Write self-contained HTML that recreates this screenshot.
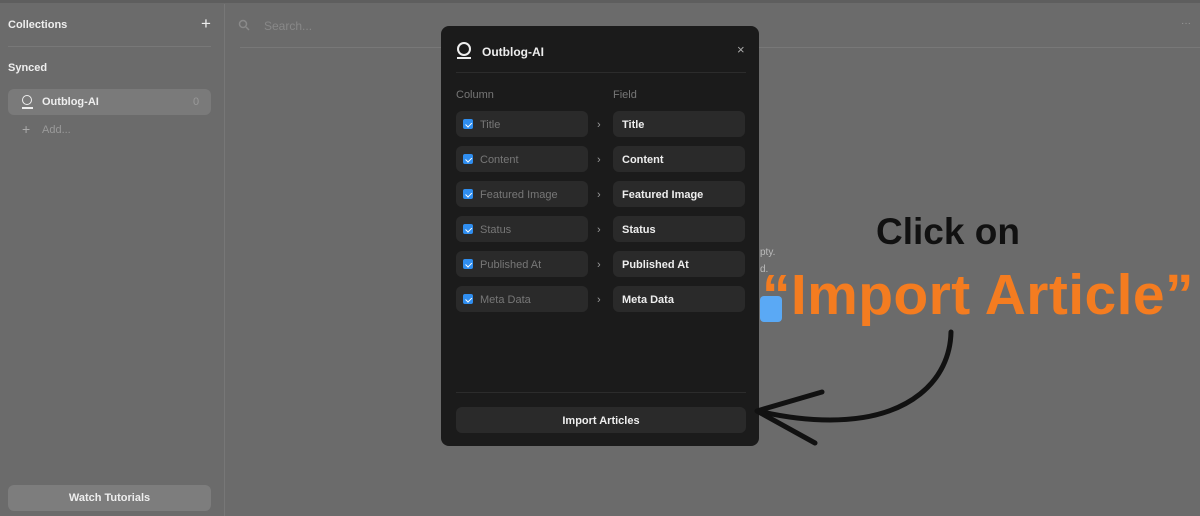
<!DOCTYPE html>
<html><head><style>
body{margin:0;width:1200px;height:516px;background:#6b6b6b;font-family:"Liberation Sans",sans-serif;position:relative;overflow:hidden}
.abs{position:absolute}
.side{left:0;top:4px;width:224px;height:512px;border-right:1px solid #777}
.t{color:#eee;font-weight:bold;font-size:11px}
.modal{left:441px;top:26px;width:318px;height:420px;background:#1b1b1b;border-radius:8px}
.row{position:absolute;height:26px;border-radius:6px;background:#2a2a2a;font-size:11px}
.l{left:15px;width:132px;color:#777}
.r{left:172px;width:132px;color:#eee;font-weight:bold}
.cb{position:absolute;left:7px;top:8px;width:10px;height:10px;background:#2f8ef0;border-radius:2px}
.cb:after{content:"";position:absolute;left:2px;top:1px;width:5px;height:3px;border-left:1.5px solid #fff;border-bottom:1.5px solid #fff;transform:rotate(-45deg) translate(-1px,2px)}
.row span{position:absolute;top:8px}
.l span{left:24px}.r span{left:9px}
.chev{position:absolute;left:156px;color:#999;font-size:11px}
</style></head><body>
<div class="abs" style="left:0;top:0;width:1200px;height:3px;background:#5e5e5e"></div>
<div class="abs side">
 <div class="abs t" style="left:8px;top:15px">Collections</div>
 <div class="abs" style="left:201px;top:10px;color:#eee;font-size:17px">+</div>
 <div class="abs" style="left:8px;top:42px;width:203px;height:1px;background:#787878"></div>
 <div class="abs t" style="left:8px;top:58px">Synced</div>
 <div class="abs" style="left:8px;top:85px;width:203px;height:26px;background:#7a7a7a;border-radius:6px"></div>
 <div class="abs" style="left:22px;top:91px;width:8px;height:8px;border:1.5px solid #eee;border-radius:50%"></div>
 <div class="abs" style="left:22px;top:103px;width:11px;height:1.5px;background:#eee"></div>
 <div class="abs t" style="left:42px;top:92px">Outblog-AI</div>
 <div class="abs" style="left:193px;top:92px;color:#999;font-size:11px">0</div>
 <div class="abs" style="left:22px;top:117px;color:#aaa;font-size:14px">+</div>
 <div class="abs" style="left:42px;top:120px;color:#9a9a9a;font-size:11px">Add...</div>
 <div class="abs" style="left:8px;top:481px;width:203px;height:26px;background:#7d7d7d;border-radius:6px;color:#eee;font-weight:bold;font-size:11px;text-align:center;line-height:26px">Watch Tutorials</div>
</div>
<svg class="abs" style="left:238px;top:19px" width="12" height="12"><circle cx="5" cy="5" r="3.5" stroke="#8a8a8a" stroke-width="1.5" fill="none"/><line x1="8" y1="8" x2="11" y2="11" stroke="#8a8a8a" stroke-width="1.5"/></svg>
<div class="abs" style="left:264px;top:19px;color:#888;font-size:12px">Search...</div>
<div class="abs" style="left:240px;top:47px;width:960px;height:1px;background:#787878"></div>
<div class="abs" style="left:1181px;top:18px;color:#999;font-size:10px">···</div>
<div class="abs" style="left:760px;top:247px;color:#bbb;font-size:10px">pty.</div>
<div class="abs" style="left:760px;top:264px;color:#bbb;font-size:10px">d.</div>
<div class="abs" style="left:760px;top:296px;width:22px;height:26px;background:#5aa9f5;border-radius:4px"></div>
<div class="abs modal">
 <div class="abs" style="left:16px;top:16px;width:10px;height:10px;border:2px solid #eee;border-radius:50%"></div>
 <div class="abs" style="left:16px;top:31px;width:14px;height:2px;background:#eee"></div>
 <div class="abs t" style="left:41px;top:19px;font-size:12px">Outblog-AI</div>
 <div class="abs" style="left:296px;top:16px;color:#aaa;font-size:13px">×</div>
 <div class="abs" style="left:15px;top:46px;width:290px;height:1px;background:#2c2c2c"></div>
 <div class="abs" style="left:15px;top:63px;color:#777;font-size:11px">Column</div>
 <div class="abs" style="left:172px;top:63px;color:#777;font-size:11px">Field</div>
 <div style="position:absolute;left:0;top:85px;width:318px">
  <div class="row l" style="top:0"><div class="cb"></div><span>Title</span></div><div class="chev" style="top:8px">›</div><div class="row r" style="top:0"><span>Title</span></div>
  <div class="row l" style="top:35px"><div class="cb"></div><span>Content</span></div><div class="chev" style="top:43px">›</div><div class="row r" style="top:35px"><span>Content</span></div>
  <div class="row l" style="top:70px"><div class="cb"></div><span>Featured Image</span></div><div class="chev" style="top:78px">›</div><div class="row r" style="top:70px"><span>Featured Image</span></div>
  <div class="row l" style="top:105px"><div class="cb"></div><span>Status</span></div><div class="chev" style="top:113px">›</div><div class="row r" style="top:105px"><span>Status</span></div>
  <div class="row l" style="top:140px"><div class="cb"></div><span>Published At</span></div><div class="chev" style="top:148px">›</div><div class="row r" style="top:140px"><span>Published At</span></div>
  <div class="row l" style="top:175px"><div class="cb"></div><span>Meta Data</span></div><div class="chev" style="top:183px">›</div><div class="row r" style="top:175px"><span>Meta Data</span></div>
 </div>
 <div class="abs" style="left:15px;top:366px;width:290px;height:1px;background:#2c2c2c"></div>
 <div class="abs" style="left:15px;top:381px;width:290px;height:26px;background:#2a2a2a;border-radius:6px;color:#eee;font-weight:bold;font-size:11px;text-align:center;line-height:28px">Import Articles</div>
</div>
<div class="abs" style="left:876px;top:211px;font-size:37px;font-weight:bold;color:#111">Click on</div>
<div class="abs" style="left:762px;top:262px;font-size:57px;font-weight:bold;color:#f47c20;white-space:nowrap;letter-spacing:0.4px">“Import Article”</div>
<svg class="abs" style="left:0;top:0" width="1200" height="516">
 <path d="M951 332 C950 380 910 420 830 420 C800 420 775 415 758 411" stroke="#111" stroke-width="5" fill="none" stroke-linecap="round"/>
 <path d="M822 392 L757 411 L815 443" stroke="#111" stroke-width="5" fill="none" stroke-linecap="round" stroke-linejoin="round"/>
</svg>
</body></html>
